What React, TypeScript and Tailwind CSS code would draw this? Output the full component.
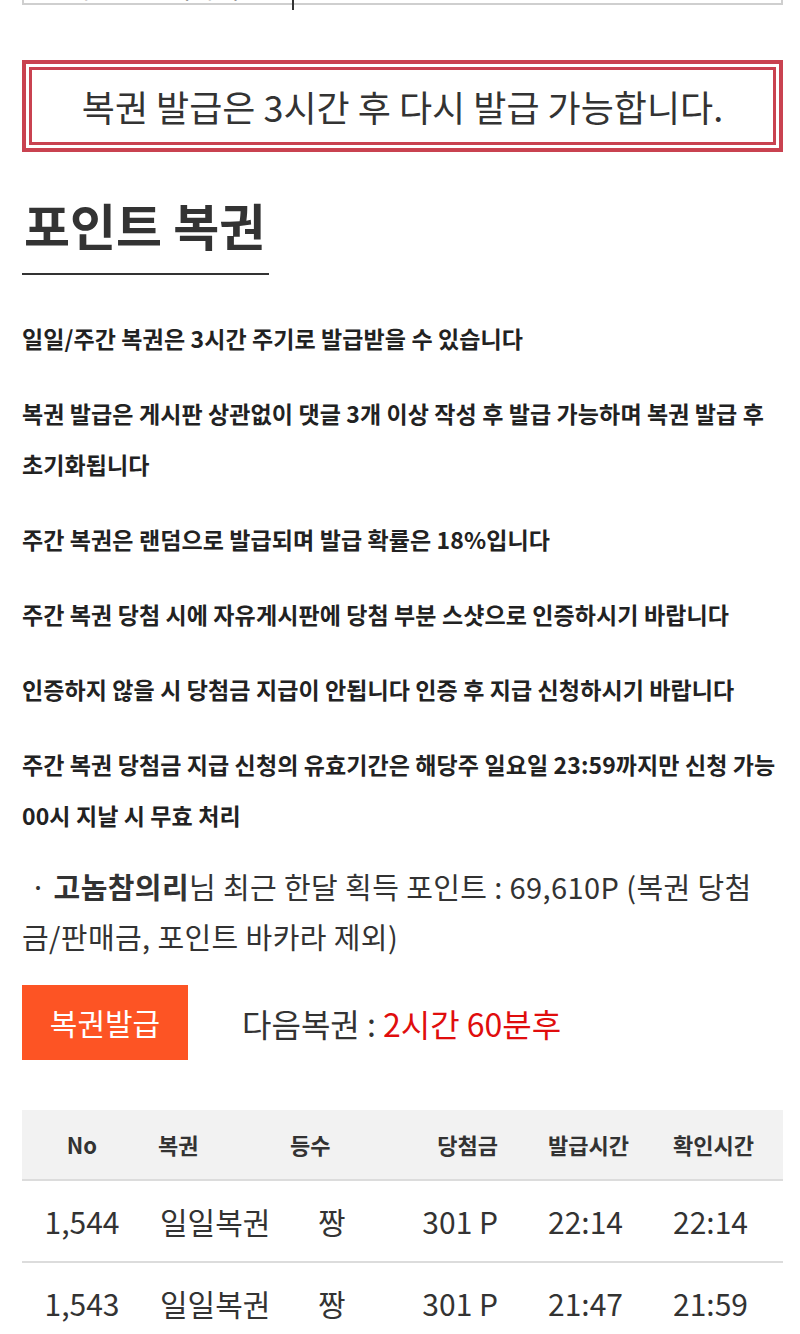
import React from "react";

const font = { fontFamily: '"Noto Sans CJK KR", "Noto Sans", sans-serif' };

const rules: string[][] = [
  ["일일/주간 복권은 3시간 주기로 발급받을 수 있습니다"],
  ["복권 발급은 게시판 상관없이 댓글 3개 이상 작성 후 발급 가능하며 복권 발급 후", "초기화됩니다"],
  ["주간 복권은 랜덤으로 발급되며 발급 확률은 18%입니다"],
  ["주간 복권 당첨 시에 자유게시판에 당첨 부분 스샷으로 인증하시기 바랍니다"],
  ["인증하지 않을 시 당첨금 지급이 안됩니다 인증 후 지급 신청하시기 바랍니다"],
  ["주간 복권 당첨금 지급 신청의 유효기간은 해당주 일요일 23:59까지만 신청 가능", "00시 지날 시 무효 처리"],
];

const history = [
  { no: "1,544", kind: "일일복권", rank: "짱", prize: "301 P", issued: "22:14", checked: "22:14" },
  { no: "1,543", kind: "일일복권", rank: "짱", prize: "301 P", issued: "21:47", checked: "21:59" },
];

const cols = "grid grid-cols-[120px_140px_118px_120px_140px_123px] items-center";

export default function App() {
  return (
    <div className="w-[800px] h-[1334px] overflow-hidden bg-white text-[#333]" style={font}>
      <div className="pl-[22px] pr-[17px]">
        {/* memo box, mostly scrolled out of view */}
        <div className="relative">
          <div className="h-[5px] overflow-hidden border-x-2 border-b-2 border-[#cfcfcf]">
            <div className="-mt-[33px] pl-[42px] text-[26px] leading-[40px] text-[#444]">내용을 입력하세요</div>
          </div>
          <div className="absolute left-[270px] top-0 h-[10px] w-[2px] bg-[#333]" />
        </div>

        {/* notice */}
        <div className="mt-[55px] border-4 border-[#c94250] p-[3px]">
          <div className="flex h-[78px] items-center justify-center border-[3px] border-[#c94250] text-[36px] text-[#333]">
            복권 발급은 3시간 후 다시 발급 가능합니다.
          </div>
        </div>

        {/* title */}
        <div className="mt-[35px]">
          <h2 className="inline-block border-b-2 border-[#333] pb-[11px] pl-[2px] pr-[4px] text-[50px] font-bold leading-[75px] text-[#333]">
            포인트 복권
          </h2>
        </div>

        <div className="mt-[38px] flex flex-col gap-[24px]">
          {rules.map((lines, i) => (
            <p key={i} className="text-[23px] font-bold leading-[51px] tracking-[0.1px] text-[#222]">
              {lines.map((l) => (
                <span key={l} className="block whitespace-nowrap">
                  {l}
                </span>
              ))}
            </p>
          ))}
        </div>

        <div className="mt-[20px] text-[29px] leading-[50px] tracking-[0.4px] text-[#333]">
          <span className="block whitespace-nowrap pl-[8px]">
            · <b className="font-bold">고놈참의리</b>님 최근 한달 획득 포인트 : 69,610P (복권 당첨
          </span>
          <span className="block whitespace-nowrap">금/판매금, 포인트 바카라 제외)</span>
        </div>

        <div className="mt-[24px] flex items-center gap-[54px]">
          <button className="flex h-[75px] w-[166px] items-center justify-center bg-[#fd5424] text-[30px] text-white">
            복권발급
          </button>
          <div className="text-[32px] text-[#333]">
            다음복권 : <span className="text-[#e00d0d]">2시간 60분후</span>
          </div>
        </div>

        {/* history table */}
        <div className="mt-[50px]">
          <div className={`${cols} h-[71px] border-b-2 border-[#dcdcdc] bg-[#f2f2f2] text-[22px] font-bold text-[#333]`}>
            <div className="text-center">No</div>
            <div className="pl-[16px]">복권</div>
            <div className="pl-[8px]">등수</div>
            <div className="pr-[22px] text-right">당첨금</div>
            <div className="pl-[28px]">발급시간</div>
            <div className="pl-[13px]">확인시간</div>
          </div>
          {history.map((r) => (
            <div key={r.no} className={`${cols} h-[82px] border-b-2 border-[#dcdcdc] text-[30px] text-[#333]`}>
              <div className="text-center">{r.no}</div>
              <div className="pl-[18px]">{r.kind}</div>
              <div className="pl-[36px]">{r.rank}</div>
              <div className="pr-[22px] text-right">{r.prize}</div>
              <div className="pl-[28px]">{r.issued}</div>
              <div className="pl-[13px]">{r.checked}</div>
            </div>
          ))}
        </div>
      </div>
    </div>
  );
}
